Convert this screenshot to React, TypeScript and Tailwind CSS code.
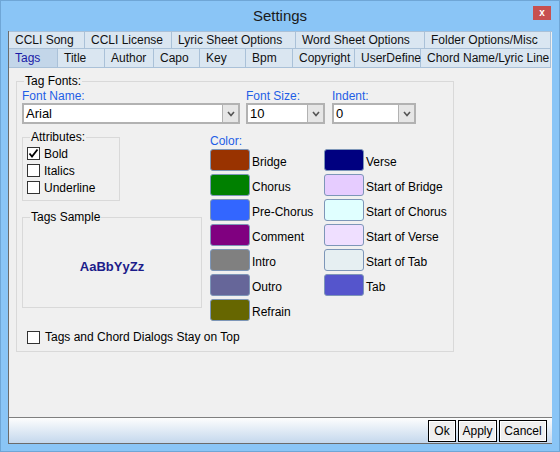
import type { ReactNode } from "react";

const rowTabs1 = [
  { label: "CCLI Song", w: "w-[76px]" },
  { label: "CCLI License", w: "w-[87px]" },
  { label: "Lyric Sheet Options", w: "w-[124px]" },
  { label: "Word Sheet Options", w: "w-[129px]" },
  { label: "Folder Options/Misc", w: "w-[126px]" },
];

const rowTabs2 = [
  { label: "Tags", w: "w-[49px]" },
  { label: "Title", w: "w-[47px]" },
  { label: "Author", w: "w-[49px]" },
  { label: "Capo", w: "w-[46px]" },
  { label: "Key", w: "w-[46px]" },
  { label: "Bpm", w: "w-[47px]" },
  { label: "Copyright", w: "w-[62px]" },
  { label: "UserDefine", w: "w-[66px]" },
  { label: "Chord Name/Lyric Line", w: "w-[130px]" },
];

const colors = [
  ["Bridge", "bg-[#993300]", "Verse", "bg-[#000080]"],
  ["Chorus", "bg-[#008000]", "Start of Bridge", "bg-[#e6ccff]"],
  ["Pre-Chorus", "bg-[#3366ff]", "Start of Chorus", "bg-[#e0ffff]"],
  ["Comment", "bg-[#800080]", "Start of Verse", "bg-[#efdfff]"],
  ["Intro", "bg-[#808080]", "Start of Tab", "bg-[#e6eff2]"],
  ["Outro", "bg-[#666699]", "Tab", "bg-[#5555cc]"],
  ["Refrain", "bg-[#666600]", "", ""],
];

function Group({ title, className, children }: { title: string; className: string; children?: ReactNode }) {
  return (
    <div className={`relative border border-[#d9d9d9] ${className}`}>
      <span className="absolute left-[7px] top-[-8px] whitespace-nowrap bg-[#f0f0f0] px-[1px] leading-[14px]">{title}</span>
      {children}
    </div>
  );
}

function Check({ checked, label }: { checked?: boolean; label: string }) {
  return (
    <div className="flex h-[17px] items-center whitespace-nowrap">
      <span className="flex h-[13px] w-[13px] shrink-0 items-center justify-center border border-[#333] bg-white">
        {checked && (
          <svg width="11" height="11" viewBox="0 0 11 11">
            <path d="M1.5 5.5 L4 8.5 L9.5 1.5" fill="none" stroke="#000" strokeWidth="1.8" />
          </svg>
        )}
      </span>
      <span className="ml-[4px]">{label}</span>
    </div>
  );
}

function Combo({ value, w }: { value: string; w: string }) {
  return (
    <div className={`flex h-[21px] border-2 border-[#b2b2b2] bg-white ${w}`}>
      <span className="flex-1 pl-[2px] text-[13px] leading-[17px]">{value}</span>
      <span className="flex w-[16px] items-center justify-center border-l border-[#b2b2b2] bg-[#e6e6e6]">
        <svg width="8" height="6" viewBox="0 0 8 6">
          <path d="M1 1 L4 4.5 L7 1" fill="none" stroke="#555" strokeWidth="1.6" />
        </svg>
      </span>
    </div>
  );
}

function Tab({ label, w, active }: { label: string; w: string; active?: boolean }) {
  return (
    <div
      className={`${w} shrink-0 whitespace-nowrap border-r border-b border-[#aac1d8] pl-[6px] ${
        active ? "bg-[#c3d6e9] text-[#1a1aa6]" : "bg-[#dae6f1] text-[#111]"
      }`}
    >
      {label}
    </div>
  );
}

export default function App() {
  return (
    <div
      className="flex h-[452px] w-[560px] flex-col border border-[#6fa6d6] bg-[#8ac5f6] pb-[7px] text-[12px] text-black"
      style={{ fontFamily: '"Liberation Sans", Arial, sans-serif' }}
    >
      <div className="relative flex h-[30px] items-center justify-center">
        <span className="text-[15px] text-[#1a1a1a]">Settings</span>
        <span className="absolute right-[8px] top-[5px] flex h-[14px] w-[18px] items-center justify-center bg-[#c75050] text-[10px] font-bold leading-none text-white">
          x
        </span>
      </div>

      <div className="mx-[7px] flex flex-1 flex-col border-l border-b border-[#6b6b6b] bg-[#f0f0f0]">
        <div className="flex h-[18px] border-t border-[#aac1d8] leading-[17px]">
          {rowTabs1.map((t) => (
            <Tab key={t.label} label={t.label} w={t.w} />
          ))}
        </div>
        <div className="flex h-[19px] leading-[19px]">
          {rowTabs2.map((t, i) => (
            <Tab key={t.label} label={t.label} w={t.w} active={i === 0} />
          ))}
        </div>

        <div className="flex-1 pl-[7px] pt-[13px]">
          <Group title="Tag Fonts:" className="h-[271px] w-[438px] pl-[5px] pt-[8px]">
            <div className="flex">
              <div className="w-[218px]">
                <div className="h-[13px] leading-[13px] text-[#1e5ee6]">Font Name:</div>
                <Combo value="Arial" w="w-[218px]" />
              </div>
              <div className="ml-[6px] w-[79px]">
                <div className="h-[13px] leading-[13px] text-[#1e5ee6]">Font Size:</div>
                <Combo value="10" w="w-[79px]" />
              </div>
              <div className="ml-[7px] w-[84px]">
                <div className="h-[13px] leading-[13px] text-[#1e5ee6]">Indent:</div>
                <Combo value="0" w="w-[84px]" />
              </div>
            </div>

            <div className="flex">
              <div className="mt-[13px] w-[180px] shrink-0">
                <Group title="Attributes:" className="h-[64px] w-[98px] pl-[4px] pt-[7px]">
                  <Check checked label="Bold" />
                  <Check label="Italics" />
                  <Check label="Underline" />
                </Group>
                <Group title="Tags Sample" className="mt-[16px] flex h-[91px] w-[180px] items-center justify-center pt-[9px]">
                  <span className="text-[13px] font-bold text-[#1c1c8a]">AaBbYyZz</span>
                </Group>
                <div className="mt-[20px] flex items-center whitespace-nowrap pl-[5px]">
                  <span className="h-[13px] w-[13px] shrink-0 border border-[#333] bg-white" />
                  <span className="ml-[5px]">Tags and Chord Dialogs Stay on Top</span>
                </div>
              </div>

              <div className="ml-[8px] mt-[10px]">
                <div className="h-[14px] leading-[14px] text-[#1e5ee6]">Color:</div>
                <div className="mt-[1px] grid grid-cols-[114px_114px]">
                  {colors.map(([a, ac, b, bc]) => (
                    <div key={a} className="contents">
                      <div className="flex h-[25px] items-start whitespace-nowrap">
                        <span className={`h-[22px] w-[40px] shrink-0 rounded-[3px] border border-[#7d96b8] ${ac}`} />
                        <span className="ml-[2px] mt-[6px] leading-[14px]">{a}</span>
                      </div>
                      <div className="flex h-[25px] items-start whitespace-nowrap">
                        {b && (
                          <>
                            <span className={`h-[22px] w-[40px] shrink-0 rounded-[3px] border border-[#7d96b8] ${bc}`} />
                            <span className="ml-[2px] mt-[6px] leading-[14px]">{b}</span>
                          </>
                        )}
                      </div>
                    </div>
                  ))}
                </div>
              </div>
            </div>
          </Group>
        </div>

        <div className="flex h-[26px] items-start justify-end gap-[2px] border-t border-[#7f7f7f] bg-gradient-to-b from-[#fdfdfd] to-[#c4d8ed] pr-[5px] pt-[2px]">
          <button className="h-[22px] w-[28px] border border-black bg-[#efefef] shadow-[inset_0_0_0_1px_#fff]">Ok</button>
          <button className="h-[22px] w-[39px] border border-black bg-[#efefef] shadow-[inset_0_0_0_1px_#fff]">Apply</button>
          <button className="h-[22px] w-[48px] border border-black bg-[#efefef] shadow-[inset_0_0_0_1px_#fff]">Cancel</button>
        </div>
      </div>
    </div>
  );
}
